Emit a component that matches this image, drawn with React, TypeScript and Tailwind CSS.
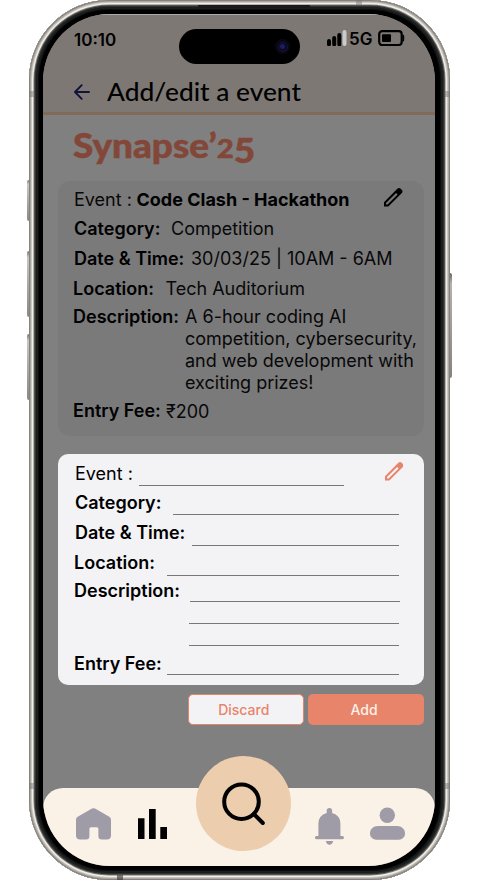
import type { ReactNode } from "react";

function Pencil({ className }: { className: string }) {
  return (
    <svg viewBox="3 3 18 18" className={className} fill="currentColor">
      <path d="M5 19h1.425L16.2 9.225 14.775 7.8 5 17.575V19ZM3 21v-4.25L16.2 3.575q.3-.275.663-.425t.762-.15q.4 0 .775.15t.65.45L20.425 5q.3.275.438.65T21 6.4q0 .4-.137.763t-.438.662L7.25 21H3Z" />
    </svg>
  );
}

function Row({ label, labelClass, className, children }: { label: string; labelClass: string; className: string; children?: ReactNode }) {
  return (
    <div className={"flex whitespace-nowrap leading-[22px] " + className}>
      <span className={"shrink-0 " + labelClass}>{label}</span>
      {children}
    </div>
  );
}

function Line({ className }: { className: string }) {
  return <span className={"block h-px shrink-0 bg-[#77777a] " + className} />;
}

function StatusBar() {
  return (
    <div className="flex h-[50px] pl-[31px] pt-[14px]">
      <span className="w-[105px] text-[17px] font-semibold leading-[22px]">10:10</span>
      <div className="flex h-[35px] w-[121px] items-center justify-end rounded-full bg-black pr-[10px]">
        <div className="flex size-[15px] items-center justify-center rounded-full bg-[#0b0710]">
          <div className="flex size-[10px] items-center justify-center rounded-full border border-[#15153f] bg-[#090924]">
            <div className="size-[5px] rounded-full bg-[#1c1c60]" />
          </div>
        </div>
      </div>
      <svg viewBox="0 0 20 16" className="ml-[27px] mt-px h-4 w-5">
        <path d="M2 11v3.2M7.2 8v6.2M12.3 5v9.2" stroke="#000" strokeWidth="4" strokeLinecap="round" />
        <path d="M17.5 2v12" stroke="#cacaca" strokeWidth="4" strokeLinecap="round" />
      </svg>
      <span className="ml-[2px] w-[27px] text-[17px] font-semibold leading-[20px]">5G</span>
      <svg viewBox="0 0 27 17" className="ml-0.5 mt-px h-[17px] w-[27px]" fill="none">
        <rect x="1.2" y="1.2" width="22.5" height="13.8" rx="3" stroke="#000" strokeWidth="2.2" />
        <rect x="4" y="4.2" width="9" height="7.8" rx="1" fill="#000" />
        <path d="M24.5 4.5q1.7 0 1.7 1.6v4q0 1.6-1.7 1.6Z" fill="#000" />
      </svg>
    </div>
  );
}

function EventCard() {
  return (
    <section className="ml-[15px] mt-[13px] h-[255px] w-[366px] rounded-[12px] bg-[#7a7a7b] pl-[15px] pt-[8px] text-[18px] text-[#080808]">
      <Row label="Event :" labelClass="w-[62.5px]" className="ml-px h-[29px]">
        <span className="w-[214px] font-bold text-black">Code Clash - Hackathon</span>
        <Pencil className="-mt-px ml-[33.5px] size-[18.5px] text-black" />
      </Row>
      <Row label="Category:" labelClass="w-[97px] font-semibold text-black" className="ml-px h-[30px]">Competition</Row>
      <Row label="Date & Time:" labelClass="w-[117px] font-semibold text-black" className="ml-px h-[30px]">30/03/25 | 10AM - 6AM</Row>
      <Row label="Location:" labelClass="w-[92.5px] font-semibold text-black" className="h-[28px]">Tech Auditorium</Row>
      <Row label="Description:" labelClass="w-[112px] font-semibold text-black" className="h-[94px]">
        <p>A 6-hour coding AI<br />competition, cybersecurity,<br />and web development with<br />exciting prizes!</p>
      </Row>
      <Row label="Entry Fee:" labelClass="w-[93px] font-semibold text-black" className=""><span className="pt-px">₹200</span></Row>
    </section>
  );
}

function EventForm() {
  return (
    <section className="ml-[15px] mt-[17.5px] h-[231px] w-[366px] rounded-[10px] bg-[#f3f3f6] pl-4 pt-[9.5px] text-[18px] text-black">
      <Row label="Event :" labelClass="w-[64px]" className="ml-px h-[29px]">
        <Line className="mt-[22px] w-[205px]" />
        <Pencil className="-mt-px ml-[40.5px] size-[18.5px] text-[#e8846b]" />
      </Row>
      <Row label="Category:" labelClass="w-[98px] font-semibold" className="ml-px h-[30px]"><Line className="mt-[22px] w-[226px]" /></Row>
      <Row label="Date & Time:" labelClass="w-[117px] font-semibold" className="ml-px h-[30px]"><Line className="mt-[23px] w-[207px]" /></Row>
      <Row label="Location:" labelClass="w-[93px] font-semibold" className="h-[28px]"><Line className="mt-[23px] w-[232px]" /></Row>
      <Row label="Description:" labelClass="w-[115px] font-semibold" className="h-[73px]">
        <div className="flex flex-col gap-[21px] pt-[21px]">
          <Line className="ml-px w-[210px]" />
          <Line className="w-[210px]" />
          <Line className="w-[210px]" />
        </div>
      </Row>
      <Row label="Entry Fee:" labelClass="w-[93px] font-semibold" className=""><Line className="mt-[21px] w-[232px]" /></Row>
    </section>
  );
}

function BottomNav() {
  return (
    <nav className="relative mt-auto h-[78px] rounded-t-[20px] bg-[#faf1e7]">
      <svg viewBox="43 788 392 78" className="h-[78px] w-[392px]" fill="#9f9ba7">
        <path d="M92 808.6q1.5-.9 3 0l14.3 8.1q1.7 1 1.7 3v15.5q0 4.3-4.3 4.3h-5q-3.3 0-3.3-3.3v-7.4q0-1.6-1.6-1.6h-5.8q-1.6 0-1.6 1.6v7.4q0 3.3-3.3 3.3h-5.8q-4.3 0-4.3-4.3v-15.5q0-2 1.7-3Z" />
        <path d="M138 818.2h6.5V839H138ZM149 809h6.7v30H149ZM160.3 827h6.7v12h-6.7Z" fill="#000" />
        <path d="M326.7 813v-2.2q0-2.8 2.7-2.8t2.7 2.8v2.2q8.3 2.5 8.3 10.5V836h2q1.6 0 1.6 1.6t-1.6 1.6h-26q-1.5 0-1.5-1.6t1.5-1.6h2v-12.5q0-8 8.3-10.5ZM325.8 841h7.4q-.8 3.7-3.7 3.7t-3.7-3.7Z" />
        <circle cx="387.3" cy="815.2" r="7.7" />
        <path d="M378 826h19c4.7 0 8 3.4 8 7.4s-3.3 6.4-8 6.4h-19c-4.7 0-8-2.4-8-6.4s3.3-7.4 8-7.4Z" />
      </svg>
      <button className="absolute -top-[32px] left-[153px] size-[95px] rounded-full bg-[#eccdae]">
        <svg viewBox="196 756 95 95" className="size-[95px]" fill="none" stroke="#000" strokeWidth="4" strokeLinecap="round">
          <circle cx="241.5" cy="801.7" r="17.3" />
          <path d="m253.8 814 9 9" />
        </svg>
      </button>
    </nav>
  );
}

function FrameDetails() {
  return (
    <>
      <i className="absolute -left-[2px] top-[180px] h-[41px] w-[2px] rounded-l bg-gradient-to-b from-[#777] via-[#c9c7c4] via-10% to-[#8b8884]" />
      <i className="absolute -left-[2px] top-[251px] h-[66px] w-[2px] rounded-l bg-gradient-to-b from-[#777] via-[#c9c7c4] via-10% to-[#8b8884]" />
      <i className="absolute -left-[2px] top-[334px] h-[66px] w-[2px] rounded-l bg-gradient-to-b from-[#777] via-[#c9c7c4] via-10% to-[#8b8884]" />
      <i className="absolute -right-[2px] top-[273px] h-[105px] w-[2px] rounded-r bg-gradient-to-b from-[#666] via-[#b5b2ae] via-10% to-[#85827f]" />
      <i className="absolute left-0 top-[91px] h-[6px] w-[5px] bg-[#777]/50" />
      <i className="absolute right-0 top-[91px] h-[6px] w-[5px] bg-[#777]/50" />
      <i className="absolute left-0 top-[783px] h-[6px] w-[5px] bg-[#777]/50" />
      <i className="absolute right-0 top-[783px] h-[6px] w-[5px] bg-[#777]/50" />
      <i className="absolute left-[327px] top-0 h-[5px] w-[6px] bg-[#777]/50" />
      <i className="absolute bottom-0 left-[88px] h-[5px] w-[6px] bg-[#333]/60" />
      <i className="absolute left-[169px] top-[5px] h-[3px] w-[112px] rounded-b bg-[#191a1a]" />
    </>
  );
}

export default function App() {
  return (
    <main className="h-[881px] w-[481px] overflow-hidden bg-white pl-[29px] font-['Inter','Noto_Sans',sans-serif]">
      <div className="relative h-[880px] w-[421px] rounded-[80px] bg-black pl-[14px] pt-[14px] shadow-[inset_0_0_0_1px_#85817c,inset_0_0_0_2px_#aaa7a2,inset_0_0_0_3px_#c9c7c2,inset_0_0_0_4.5px_#f0eee7,inset_0_0_0_5.5px_#77756f,inset_0_0_0_7px_#303130,inset_0_0_0_9px_#1b1e1e,inset_0_0_0_10px_#0c0d0d]">
        <FrameDetails />
        <div className="flex h-[852px] w-[392px] flex-col overflow-hidden rounded-[67px] bg-[#808080]">
          <header className="h-[101px] shrink-0 border-b-[3px] border-t border-b-[#806b58] border-t-[#aaa] bg-[#7e7874]">
            <StatusBar />
            <div className="flex pl-[31px] pt-[13px]">
              <svg viewBox="0 0 16 16" className="mt-[6px] size-4" fill="none" stroke="#11133a" strokeWidth="1.9" strokeLinecap="round" strokeLinejoin="round">
                <path d="M15 8H1.2M7.7 1.2 1 8l6.7 6.8" />
              </svg>
              <h1 className="ml-[17px] origin-left scale-x-[1.096] whitespace-nowrap font-['Lato',sans-serif] text-[24px] font-medium leading-[28px]">Add/edit a event</h1>
            </div>
          </header>
          <h2 className="ml-[30px] mt-[9px] h-[44px] origin-left scale-x-[1.085] self-start whitespace-nowrap font-['Lato',sans-serif] text-[34px] font-black leading-[42px] text-[#834739] [-webkit-text-stroke:0.5px_#834739]">
            Synapse’<span className="text-[27px]">2</span><span className="relative top-[5px] text-[34px]">5</span>
          </h2>
          <EventCard />
          <EventForm />
          <div className="ml-[145px] mt-[9px] flex gap-[4.5px] text-[14px] font-medium">
            <button className="h-[31px] w-[115.5px] rounded-[5px] border border-[#e8846b] bg-[#f3f3f6] pr-1 text-[#e8846b]">Discard</button>
            <button className="h-[31px] w-[116px] rounded-[5px] bg-[#e7846a] pr-1 text-[#faf1e7]">Add</button>
          </div>
          <BottomNav />
        </div>
      </div>
    </main>
  );
}
